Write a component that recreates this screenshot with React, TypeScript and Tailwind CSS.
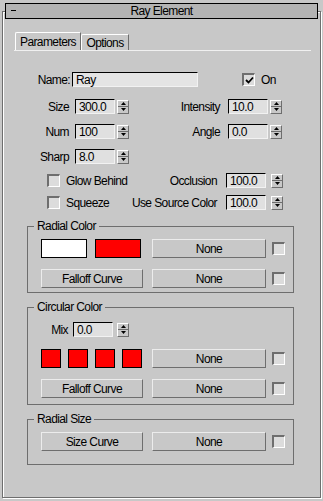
import React from "react";

const font = { fontFamily: '"Liberation Sans", Arial, sans-serif' };

function Spinner() {
  return (
    <div className="flex flex-col w-[12px] h-[14px] border-t border-l border-t-white border-l-white border-b border-r border-b-[#6e6e6e] border-r-[#6e6e6e] bg-[#c8c8c8]">
      <div className="flex-1 flex items-center justify-center border-b border-b-[#6e6e6e]">
        <svg width="5" height="3" viewBox="0 0 5 3"><path d="M2.5 0 L5 3 L0 3 Z" fill="#000" /></svg>
      </div>
      <div className="flex-1 flex items-center justify-center">
        <svg width="5" height="3" viewBox="0 0 5 3"><path d="M0 0 L5 0 L2.5 3 Z" fill="#000" /></svg>
      </div>
    </div>
  );
}

function NumInput({ value, w = "w-[40px]" }: { value: string; w?: string }) {
  return (
    <div className={`${w} h-[15px] flex items-center pl-[3px] bg-[#e0e0e0] border-t border-l border-t-black border-l-black border-b border-r border-b-[#f2f2f2] border-r-[#f2f2f2] text-[12px] leading-none text-black`}>
      {value}
    </div>
  );
}

function Check({ checked = false }: { checked?: boolean }) {
  return (
    <div className="w-[13px] h-[13px] shrink-0 bg-[#dcdcdc] border-t-2 border-l-2 border-t-[#6e6e6e] border-l-[#6e6e6e] border-b border-r border-b-white border-r-white flex items-center justify-center">
      {checked && (
        <svg width="9" height="9" viewBox="0 0 9 9">
          <path d="M1 4 L3.5 6.5 L8 1.5" stroke="#000" strokeWidth="1.8" fill="none" />
        </svg>
      )}
    </div>
  );
}

function Btn({ label, w, ml }: { label: string; w: string; ml?: string }) {
  return (
    <div className={`${w} ${ml ?? ""} h-[19px] shrink-0 flex items-center justify-center bg-[#c8c8c8] border-t border-l border-t-[#ececec] border-l-[#ececec] border-b border-r border-b-[#6e6e6e] border-r-[#6e6e6e] text-[12px] leading-none text-black`}>
      {label}
    </div>
  );
}

function Swatch({ color, w, ml }: { color: string; w: string; ml?: string }) {
  return <div className={`${w} ${ml ?? ""} h-[19px] shrink-0 border border-black`} style={{ background: color }} />;
}

function Group({ title, h, mt, children }: { title: string; h: string; mt: string; children: React.ReactNode }) {
  return (
    <div className={`relative ${mt} ml-[24px] w-[267px] ${h} border border-[#6e6e6e]`}>
      <span className="absolute -top-[8px] left-[6px] px-[3px] bg-[#c8c8c8] text-[12px] leading-[14px] text-black">
        {title}
      </span>
      {children}
    </div>
  );
}

function SpinRow({
  label,
  value,
  rlabel,
  rvalue,
  mt,
}: {
  label: string;
  value: string;
  rlabel?: string;
  rvalue?: string;
  mt: string;
}) {
  return (
    <div className={`flex items-center h-[15px] ${mt}`}>
      <div className="w-[66px] text-right text-[12px] leading-none">{label}</div>
      <div className="ml-[6px]"><NumInput value={value} /></div>
      <div className="ml-[2px]"><Spinner /></div>
      {rlabel && (
        <>
          <div className="w-[91px] text-right text-[12px] leading-none">{rlabel}</div>
          <div className="ml-[8px]"><NumInput value={rvalue ?? ""} /></div>
          <div className="ml-[2px]"><Spinner /></div>
        </>
      )}
    </div>
  );
}

function CheckRow({
  label,
  rlabel,
  value,
  mt,
}: {
  label: string;
  rlabel: string;
  value: string;
  mt: string;
}) {
  return (
    <div className={`flex items-center h-[15px] ${mt}`}>
      <div className="w-[214px] flex items-center">
        <div className="ml-[44px]"><Check /></div>
        <span className="ml-[6px] text-[12px] leading-none">{label}</span>
        <span className="flex-1" />
        <span className="text-[12px] leading-none">{rlabel}</span>
      </div>
      <div className="ml-[9px]"><NumInput value={value} /></div>
      <div className="ml-[5px]"><Spinner /></div>
    </div>
  );
}

export default function App() {
  return (
    <div className="w-[323px] h-[501px] bg-[#c8c8c8] overflow-hidden text-black tracking-[-0.6px]" style={font}>
      <div className="pt-[11px]">
        <div className="ml-[2px] w-[319px] h-[487px] border border-[#6e6e6e] shadow-[1px_1px_0_#ffffff,inset_1px_1px_0_#ffffff]">
          {/* title bar */}
          <div className="-mt-[9px] ml-[2px] w-[313px] h-[16px] border border-black bg-[#b4b4b4] relative flex items-center justify-center text-[12px] leading-none">
            <span className="absolute left-[5px] top-[6px] w-[5px] h-[1px] bg-black" />
            <span>Ray Element</span>
          </div>

          {/* tabs */}
          <div className="mt-[13px] ml-[11px] flex items-end h-[18px]">
            <div className="ml-[1px] w-[66px] h-[18px] border-t border-l border-t-white border-l-white border-r border-r-[#6e6e6e] rounded-tl-[2px] flex items-center justify-center text-[12px] leading-none">
              Parameters
            </div>
            <div className="w-[48px] h-[16px] border-t border-l border-t-white border-l-white border-r border-r-[#6e6e6e] rounded-tl-[2px] flex items-center justify-center text-[12px] leading-none">
              Options
            </div>
          </div>
          <div className="ml-[11px] w-[297px] h-[1px] bg-[#f0f0f0]" />

          {/* name row */}
          <div className="mt-[21px] flex items-center h-[15px]">
            <div className="w-[67px] text-right text-[12px] leading-none">Name:</div>
            <div className="ml-[2px] w-[126px] h-[15px] flex items-center pl-[3px] bg-[#e4e4e4] border-t border-l border-t-black border-l-black border-b border-r border-b-[#f2f2f2] border-r-[#f2f2f2] text-[12px] leading-none">
              Ray
            </div>
            <div className="ml-[44px]"><Check checked /></div>
            <span className="ml-[6px] text-[12px] leading-none">On</span>
          </div>

          <SpinRow mt="mt-[12px]" label="Size" value="300.0" rlabel="Intensity" rvalue="10.0" />
          <SpinRow mt="mt-[10px]" label="Num" value="100" rlabel="Angle" rvalue="0.0" />
          <SpinRow mt="mt-[10px]" label="Sharp" value="8.0" />

          <CheckRow mt="mt-[9px]" label="Glow Behind" rlabel="Occlusion" value="100.0" />
          <CheckRow mt="mt-[7px]" label="Squeeze" rlabel="Use Source Color" value="100.0" />

          <Group title="Radial Color" h="h-[67px]" mt="mt-[16px]">
            <div className="pt-[12px] flex items-center">
              <Swatch color="#ffffff" w="w-[46px]" ml="ml-[13px]" />
              <Swatch color="#ff0000" w="w-[46px]" ml="ml-[8px]" />
              <Btn label="None" w="w-[114px]" ml="ml-[11px]" />
              <div className="ml-[6px]"><Check /></div>
            </div>
            <div className="mt-[11px] flex items-center">
              <Btn label="Falloff Curve" w="w-[102px]" ml="ml-[13px]" />
              <Btn label="None" w="w-[114px]" ml="ml-[9px]" />
              <div className="ml-[6px]"><Check /></div>
            </div>
          </Group>

          <Group title="Circular Color" h="h-[98px]" mt="mt-[14px]">
            <div className="pt-[14px] flex items-center h-[29px]">
              <div className="w-[40px] text-right text-[12px] leading-none">Mix</div>
              <div className="ml-[5px]"><NumInput value="0.0" /></div>
              <div className="ml-[4px]"><Spinner /></div>
            </div>
            <div className="mt-[12px] flex items-center">
              <Swatch color="#ff0000" w="w-[20px]" ml="ml-[13px]" />
              <Swatch color="#ff0000" w="w-[20px]" ml="ml-[7px]" />
              <Swatch color="#ff0000" w="w-[20px]" ml="ml-[7px]" />
              <Swatch color="#ff0000" w="w-[20px]" ml="ml-[7px]" />
              <Btn label="None" w="w-[114px]" ml="ml-[10px]" />
              <div className="ml-[6px]"><Check /></div>
            </div>
            <div className="mt-[11px] flex items-center">
              <Btn label="Falloff Curve" w="w-[102px]" ml="ml-[13px]" />
              <Btn label="None" w="w-[114px]" ml="ml-[9px]" />
              <div className="ml-[6px]"><Check /></div>
            </div>
          </Group>

          <Group title="Radial Size" h="h-[46px]" mt="mt-[14px]">
            <div className="pt-[12px] flex items-center">
              <Btn label="Size Curve" w="w-[102px]" ml="ml-[13px]" />
              <Btn label="None" w="w-[114px]" ml="ml-[9px]" />
              <div className="ml-[6px]"><Check /></div>
            </div>
          </Group>
        </div>
      </div>
    </div>
  );
}
